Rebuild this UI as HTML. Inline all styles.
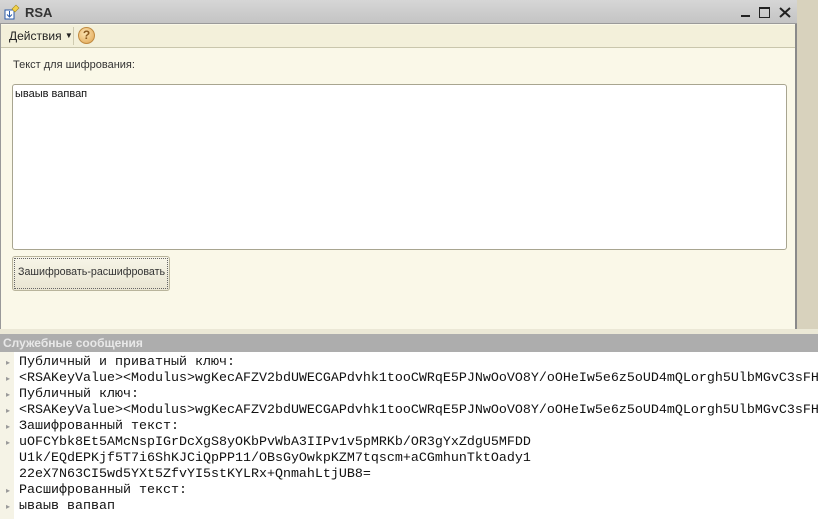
<!DOCTYPE html>
<html><head><meta charset="utf-8"><style>
*{margin:0;padding:0;box-sizing:border-box}
body{width:818px;height:519px;overflow:hidden;background:#d8d2bd;font-family:"Liberation Sans",sans-serif;position:relative}
.abs{position:absolute}
</style></head><body>
<div class="abs" style="left:0;top:0;width:797px;height:329px;background:#faf8e8;border-right:2px solid #8a8a8a;border-left:1px solid #999"></div>
<div class="abs" style="left:0;top:0;width:797px;height:24px;background:linear-gradient(#d6d6d6,#c4c4c4);border-bottom:1px solid #9a9a9a"></div>
<svg class="abs" style="left:3px;top:4px" width="18" height="16" viewBox="0 0 18 16">
<rect x="2" y="6" width="9" height="9" fill="#fff" stroke="#2a5aa8"/>
<path d="M6.5 7v6M4 10.5l2.5 2.5 2.5-2.5" stroke="#2a5aa8" fill="none"/>
<path d="M9 5l4-4 3 3-4 4z" fill="#f2d24a" stroke="#a88a20" stroke-width=".6"/>
</svg>
<div class="abs" style="left:25px;top:5px;font-size:13px;font-weight:bold;color:#333">RSA</div>
<div class="abs" style="left:741px;top:15px;width:9px;height:2px;background:#222"></div>
<div class="abs" style="left:759px;top:7px;width:11px;height:11px;border:1.5px solid #222;border-top-width:2px"></div>
<svg class="abs" style="left:779px;top:7px" width="12" height="11"><path d="M1 1l10 9M11 1L1 10" stroke="#222" stroke-width="2"/></svg>
<div class="abs" style="left:1px;top:25px;width:794px;height:23px;background:#f3f0da;border-bottom:1px solid #c9c6ac"></div>
<div class="abs" style="left:9px;top:29px;font-size:12px;color:#222">Действия <span style="font-size:8px;vertical-align:2px">▼</span></div>
<div class="abs" style="left:73px;top:27px;width:1px;height:18px;background:#cfcbb0"></div>
<div class="abs" style="left:78px;top:27px;width:17px;height:17px;border-radius:50%;background:radial-gradient(circle at 40% 35%,#fbe3b0,#e0a450);border:1px solid #c08a40;font-size:12px;font-weight:bold;color:#8a5a20;text-align:center;line-height:15px">?</div>
<div class="abs" style="left:13px;top:59px;font-size:11px;color:#333">Текст для шифрования:</div>
<div class="abs" style="left:12px;top:84px;width:775px;height:166px;background:#fff;border:1px solid #a8a590;border-radius:3px"></div>
<div class="abs" style="left:15px;top:88px;font-size:11px;color:#111">ываыв вапвап</div>
<div class="abs" style="left:12px;top:256px;width:158px;height:35px;background:linear-gradient(#f7f5e8,#e9e5d2);border:1px solid #b9b59c;border-radius:3px"></div>
<div class="abs" style="left:14px;top:258px;width:154px;height:31px;border:1px dotted #666"></div>
<div class="abs" style="left:18px;top:266px;font-size:10.7px;color:#333">Зашифровать-расшифровать</div>
<div class="abs" style="left:0;top:329px;width:818px;height:5px;background:#ebe8d6"></div>
<div class="abs" style="left:0;top:334px;width:818px;height:18px;background:#adadad"></div>
<div class="abs" style="left:3px;top:336px;font-size:12px;font-weight:bold;color:#e8e8e8">Служебные сообщения</div>
<div class="abs" style="left:0;top:352px;width:818px;height:167px;background:#fff"></div>
<div class="abs" style="left:0;top:352px;width:14px;height:167px;background:#f5f3e6"></div>
<div class="abs" style="left:6px;top:355px;font-size:8px;line-height:16px;color:#999;white-space:pre">▸
▸
▸
▸
▸
▸


▸
▸</div>
<div class="abs" style="left:19px;top:355px;font-family:'Liberation Mono',monospace;font-size:13.33px;line-height:16px;color:#111;white-space:pre">Публичный и приватный ключ:
&lt;RSAKeyValue&gt;&lt;Modulus&gt;wgKecAFZV2bdUWECGAPdvhk1tooCWRqE5PJNwOoVO8Y/oOHeIw5e6z5oUD4mQLorgh5UlbMGvC3sFH
Публичный ключ:
&lt;RSAKeyValue&gt;&lt;Modulus&gt;wgKecAFZV2bdUWECGAPdvhk1tooCWRqE5PJNwOoVO8Y/oOHeIw5e6z5oUD4mQLorgh5UlbMGvC3sFH
Зашифрованный текст:
uOFCYbk8Et5AMcNspIGrDcXgS8yOKbPvWbA3IIPv1v5pMRKb/OR3gYxZdgU5MFDD
U1k/EQdEPKjf5T7i6ShKJCiQpPP11/OBsGyOwkpKZM7tqscm+aCGmhunTktOady1
22eX7N63CI5wd5YXt5ZfvYI5stKYLRx+QnmahLtjUB8=
Расшифрованный текст:
ываыв вапвап</div>
</body></html>
